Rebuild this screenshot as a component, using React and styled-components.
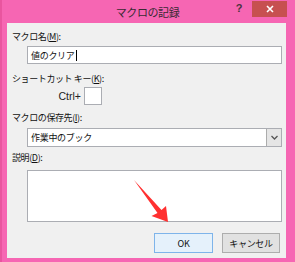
import React from "react";
import styled, { createGlobalStyle } from "styled-components";

const Global = createGlobalStyle`
  html, body { margin: 0; padding: 0; background: #f666b3; }
  body { font-family: "Noto Sans CJK JP", "Noto Sans", sans-serif; }
`;

const Window = styled.div`
  position: relative;
  width: 295px;
  height: 262px;
  background: #f666b3;
  box-shadow: inset 2px 0 0 #e9559f;
  display: flex;
  flex-direction: column;
  overflow: hidden;
`;

const TitleBar = styled.div`
  height: 23px;
  display: flex;
  align-items: flex-start;
`;

const Spacer = styled.div`
  width: 63px;
  flex: none;
`;

const Title = styled.div`
  flex: 1;
  text-align: center;
  font-size: 11px;
  line-height: 24px;
  color: #3a2a33;
  letter-spacing: -0.4px;
`;

const Help = styled.div`
  width: 14px;
  text-align: center;
  font-family: "Liberation Sans", sans-serif;
  font-weight: bold;
  font-size: 11px;
  line-height: 17px;
  color: #4a3340;
  margin-right: 6px;
`;

const Close = styled.div`
  width: 35px;
  height: 16px;
  margin-top: 1px;
  margin-right: 8px;
  background: #c75050;
  display: flex;
  align-items: center;
  justify-content: center;
`;

const Body = styled.div`
  margin: 0 9px 4px 7px;
  flex: 1;
  background: #f0f0f0;
  padding: 8px 0 0 0;
  display: flex;
  flex-direction: column;
`;

const Label = styled.div`
  font-size: 9px;
  line-height: 12px;
  height: 12px;
  color: #111;
  margin-left: 5px;
  margin-top: ${(p) => p.$mt || 0}px;
  letter-spacing: -0.4px;
  white-space: nowrap;
  u { text-underline-offset: 1px; }
`;

const Field = styled.div`
  margin: ${(p) => p.$mt || 0}px 4px 0 20px;
  height: ${(p) => p.$h}px;
  box-sizing: border-box;
  background: #fff;
  border: 1px solid #abadb3;
  display: flex;
  align-items: center;
  font-size: 9px;
  color: #111;
  padding-left: 3px;
  letter-spacing: -0.3px;
`;

const Caret = styled.span`
  display: inline-block;
  width: 1px;
  height: 11px;
  background: #000;
  margin-left: 1px;
`;

const KeyRow = styled.div`
  margin-top: 2px;
  margin-left: 46px;
  height: 18px;
  display: flex;
  align-items: center;
  gap: 3px;
`;

const CtrlText = styled.span`
  font-family: "Liberation Sans", sans-serif;
  font-size: 10.5px;
  color: #222;
  width: 28px;
  text-align: right;
`;

const KeyBox = styled.div`
  width: 18px;
  height: 18px;
  box-sizing: border-box;
  background: #fff;
  border: 1px solid #abadb3;
`;

const SelectText = styled.span`
  flex: 1;
`;

const DropBtn = styled.div`
  width: 15px;
  height: 100%;
  box-sizing: border-box;
  border-left: 1px solid #acacac;
  background: #e5e5e5;
  display: flex;
  align-items: center;
  justify-content: center;
`;

const Buttons = styled.div`
  margin-top: 11px;
  margin-right: 6px;
  display: flex;
  justify-content: flex-end;
  gap: 9px;
`;

const Button = styled.div`
  width: ${(p) => p.$w}px;
  height: 20px;
  box-sizing: border-box;
  border: 1px solid ${(p) => (p.$primary ? "#7eb4ea" : "#adadad")};
  background: ${(p) => (p.$primary ? "#e5f1fb" : "#e1e1e1")};
  display: flex;
  align-items: center;
  justify-content: center;
  font-size: 9px;
  color: #111;
  letter-spacing: -0.3px;
`;

const ArrowLayer = styled.svg`
  position: absolute;
  left: 0;
  top: 0;
  pointer-events: none;
`;

export default function App() {
  return (
    <>
      <Global />
      <Window>
        <TitleBar>
          <Spacer />
          <Title>マクロの記録</Title>
          <Help>?</Help>
          <Close>
            <svg width="8" height="8" viewBox="0 0 8 8">
              <path d="M1 1L7 7M7 1L1 7" stroke="#fff" strokeWidth="1.6" />
            </svg>
          </Close>
        </TitleBar>
        <Body>
          <Label>
            マクロ名(<u>M</u>):
          </Label>
          <Field $mt={3} $h={18}>
            値のクリア
            <Caret />
          </Field>
          <Label $mt={9}>
            ショートカット キー(<u>K</u>):
          </Label>
          <KeyRow>
            <CtrlText>Ctrl+</CtrlText>
            <KeyBox />
          </KeyRow>
          <Label $mt={7}>
            マクロの保存先(<u>I</u>):
          </Label>
          <Field $mt={4} $h={19} style={{ paddingRight: 0 }}>
            <SelectText>作業中のブック</SelectText>
            <DropBtn>
              <svg width="7" height="5" viewBox="0 0 7 5">
                <path d="M0.5 1L3.5 4L6.5 1" stroke="#555" strokeWidth="1.3" fill="none" />
              </svg>
            </DropBtn>
          </Field>
          <Label $mt={5}>
            説明(<u>D</u>):
          </Label>
          <Field $mt={6} $h={52} />
          <Buttons>
            <Button $primary $w={59}>OK</Button>
            <Button $w={58}>キャンセル</Button>
          </Buttons>
        </Body>
        <ArrowLayer width="295" height="262" viewBox="0 0 295 262">
          <polygon
            points="134,180 161.5,210 166,206 168,222 151.5,216 157.5,213"
            fill="#ff3030"
          />
        </ArrowLayer>
      </Window>
    </>
  );
}
